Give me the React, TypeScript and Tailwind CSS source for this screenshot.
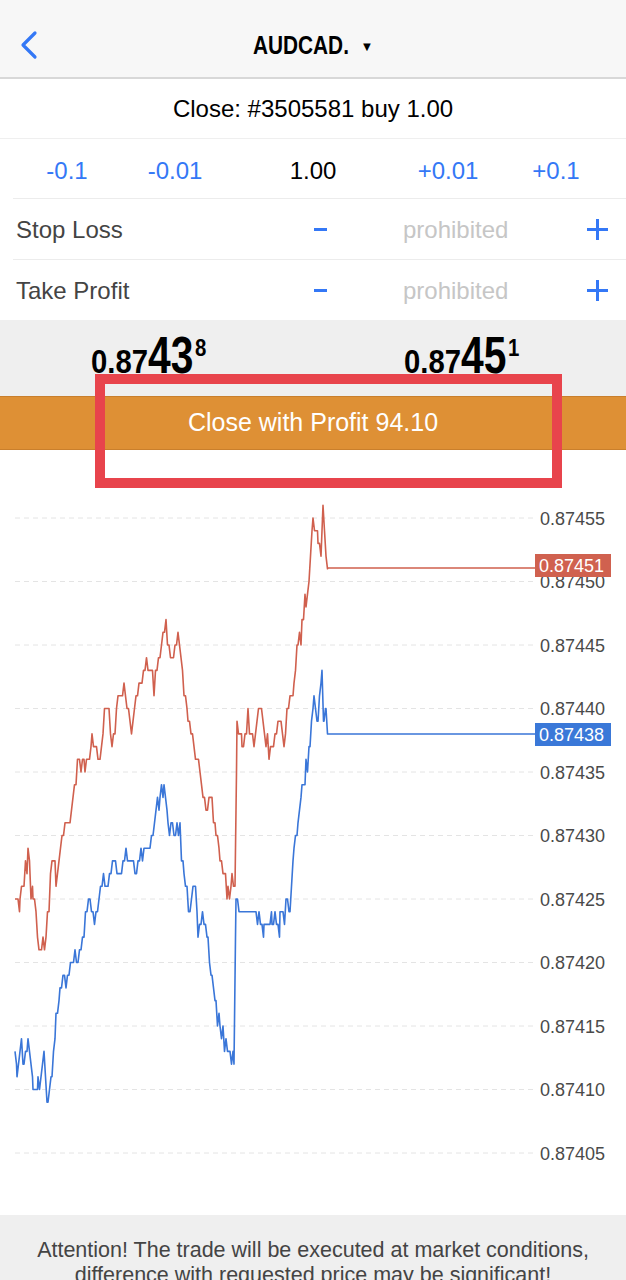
import React from "react";

const sans = "font-['Liberation_Sans',Arial,sans-serif]";

const TOP = 450;
const gridLevels = [
  "0.87455",
  "0.87450",
  "0.87445",
  "0.87440",
  "0.87435",
  "0.87430",
  "0.87425",
  "0.87420",
  "0.87415",
  "0.87410",
  "0.87405",
];

// key points of the ask/bid lines in page coords
const askKeys = [
  [15, 899], [20, 899], [24, 880], [28, 850], [33, 905], [40, 945], [46, 940],
  [52, 860], [56, 880], [62, 835], [70, 820], [78, 760], [85, 770], [92, 740],
  [100, 760], [106, 700], [112, 740], [118, 700], [124, 690], [130, 730],
  [136, 700], [142, 680], [148, 660], [154, 690], [160, 650], [166, 632],
  [172, 660], [178, 632], [184, 690], [188, 710], [194, 740], [200, 770],
  [206, 820], [212, 800], [216, 830], [220, 860], [224, 870], [228, 900],
  [232, 880], [235, 895], [237, 730], [242, 740], [248, 720], [254, 745],
  [260, 700], [266, 740], [272, 760], [278, 720], [284, 740], [290, 700],
  [294, 690], [298, 640], [302, 630], [306, 600], [309, 580], [313, 530],
  [318, 540], [321, 565], [323, 505], [326, 555], [328, 568], [535, 568],
];

const bidKeys = [
  [15, 1040], [17, 1070], [20, 1045], [24, 1060], [28, 1040], [33, 1080],
  [38, 1090], [44, 1060], [48, 1110], [52, 1070], [56, 1020], [60, 985],
  [66, 980], [72, 960], [78, 960], [84, 930], [90, 900], [96, 920], [102, 880],
  [108, 890], [114, 860], [120, 880], [126, 850], [132, 870], [138, 860],
  [144, 845], [150, 840], [156, 815], [160, 800], [164, 780], [168, 820],
  [174, 840], [180, 830], [184, 880], [190, 910], [194, 880], [198, 930],
  [204, 910], [208, 950], [212, 990], [216, 1000], [220, 1030], [226, 1040],
  [230, 1055], [234, 1060], [236, 900], [240, 920], [248, 910], [256, 915],
  [264, 930], [272, 915], [280, 925], [286, 905], [290, 905], [294, 860],
  [298, 820], [302, 790], [306, 770], [310, 740], [314, 700], [318, 720],
  [322, 670], [324, 720], [326, 710], [328, 734], [535, 734],
];

function rng(seed: number) {
  let s = seed;
  return () => {
    s = (s * 1103515245 + 12345) % 2147483648;
    return s / 2147483648;
  };
}

function buildPath(keys: number[][], seed: number) {
  const r = rng(seed);
  const pts: string[] = [];
  for (let i = 0; i < keys.length - 2; i++) {
    const [x0, y0] = keys[i];
    const [x1, y1] = keys[i + 1];
    for (let x = x0; x < x1; x += 1.5) {
      const t = (x - x0) / (x1 - x0);
      let y = y0 + (y1 - y0) * t + (r() - 0.5) * 20;
      y = 518 + Math.round((y - 518) / 12.7) * 12.7;
      pts.push(`${x.toFixed(1)},${(y - TOP).toFixed(1)}`);
    }
  }
  const [xa, ya] = keys[keys.length - 2];
  const [xb, yb] = keys[keys.length - 1];
  pts.push(`${xa},${ya - TOP}`, `${xb},${yb - TOP}`);
  return pts.join(" ");
}

const Chart = () => {
  const ask = buildPath(askKeys, 7);
  const bid = buildPath(bidKeys, 19);
  return (
    <svg width="626" height="765" className="block">
      {gridLevels.map((lbl, i) => {
        const y = 68 + i * 63.5;
        return (
          <g key={lbl}>
            <line x1="15" x2="533" y1={y} y2={y} stroke="#e4e4e4" strokeDasharray="5 4" strokeWidth="1" />
            <text x="540" y={y + 6.5} fontSize="18" fill="#4a4a4a" fontFamily="Liberation Sans, Arial, sans-serif">
              {lbl}
            </text>
          </g>
        );
      })}
      <polyline points={ask} fill="none" stroke="#d0604e" strokeWidth="1.6" strokeLinejoin="round" />
      <polyline points={bid} fill="none" stroke="#3a76d8" strokeWidth="1.6" strokeLinejoin="round" />
      <rect x="535" y="104" width="76" height="23" fill="#d0614f" />
      <text x="539" y="122" fontSize="18" fill="#ffffff" fontFamily="Liberation Sans, Arial, sans-serif">
        0.87451
      </text>
      <rect x="535" y="273" width="76" height="23" fill="#3a78d8" />
      <text x="539" y="291" fontSize="18" fill="#ffffff" fontFamily="Liberation Sans, Arial, sans-serif">
        0.87438
      </text>
    </svg>
  );
};

// condensed look: bold Liberation Sans squeezed horizontally
const Price = ({ big, tail }: { big: string; tail: string }) => (
  <div className="flex items-start text-black font-bold leading-none">
    <span className="inline-block origin-left scale-x-[0.86] -mr-[9px] text-[34px] mt-[13px]">0.87</span>
    <span className="inline-block origin-left scale-x-[0.8] -mr-[11px] text-[51px] -mt-[1px]">{big}</span>
    <span className="inline-block origin-left scale-x-[0.85] text-[24px] mt-[5px] ml-[1px]">{tail}</span>
  </div>
);

const Plus = () => (
  <span className="relative block w-[21px] h-[21px]">
    <span className="absolute left-0 top-[9px] w-[21px] h-[3px] bg-[#3478f6]" />
    <span className="absolute left-[9px] top-0 w-[3px] h-[21px] bg-[#3478f6]" />
  </span>
);

const StepRow = ({ label, h, line }: { label: string; h: string; line?: boolean }) => (
  <div className={`flex flex-col ${h}`}>
    <div className="flex flex-1 items-center pt-[1px]">
      <span className="ml-[16px] w-[298px] text-[24px] text-[#444]">{label}</span>
      <span className="block w-[13px] h-[3.5px] bg-[#3478f6]" />
      <span className="ml-[76px] text-[24px] text-[#c6c6c6]">prohibited</span>
      <span className="ml-[79px]">
        <Plus />
      </span>
    </div>
    {line && <div className="ml-[13px] h-px bg-[#ececec]" />}
  </div>
);

export default function App() {
  return (
    <div className={`relative w-[626px] h-[1280px] overflow-hidden bg-white ${sans}`}>
      <header className="relative flex items-center justify-center h-[79px] pt-[14px] bg-[#f7f7f7] border-b-2 border-[#d8d8d8]">
        <svg className="absolute left-[18px] top-[30px]" width="22" height="30" viewBox="0 0 22 30">
          <path d="M17 3 L5 15 L17 27" fill="none" stroke="#3478f6" strokeWidth="3.2" strokeLinecap="round" strokeLinejoin="round" />
        </svg>
        <span className="inline-block origin-left scale-x-[0.8] -mr-[24px] text-[26px] font-bold text-black">AUDCAD.</span>
        <span className="ml-[12px] mt-[2px] text-[13px] text-black">▼</span>
      </header>

      <div className="flex items-center justify-center h-[60px] border-b border-[#efefef] text-[24px] text-black">
        Close: #3505581 buy 1.00
      </div>

      <div className="flex flex-col h-[60px]">
        <div className="flex flex-1 items-center pt-[5px] text-[24px]">
          <span className="w-[134px] text-center text-[#3478f6]">-0.1</span>
          <span className="w-[82px] text-center text-[#3478f6]">-0.01</span>
          <span className="w-[194px] text-center text-black">1.00</span>
          <span className="w-[76px] text-center text-[#3478f6]">+0.01</span>
          <span className="w-[140px] text-center text-[#3478f6]">+0.1</span>
        </div>
        <div className="ml-[13px] h-px bg-[#ececec]" />
      </div>

      <StepRow label="Stop Loss" h="h-[61px]" line />
      <StepRow label="Take Profit" h="h-[60px]" />

      <div className="flex h-[76px] bg-[#efefef] pt-[11px]">
        <div className="ml-[91px] w-[313px]">
          <Price big="43" tail="8" />
        </div>
        <div>
          <Price big="45" tail="1" />
        </div>
      </div>

      <button className="flex items-center justify-center w-full h-[54px] bg-[#de9035] border-y border-[#c97f2c] text-white text-[25px]">
        Close with Profit 94.10
      </button>

      <Chart />

      <div className="flex flex-col items-center bg-[#efefef] pt-[23px] text-[21.5px] leading-[25px] text-[#444] text-center">
        <p>Attention! The trade will be executed at market conditions,</p>
        <p>difference with requested price may be significant!</p>
      </div>

      <div className="absolute left-[95px] top-[374px] w-[467px] h-[114px] border-[10px] border-[#e8444c]" />
    </div>
  );
}
